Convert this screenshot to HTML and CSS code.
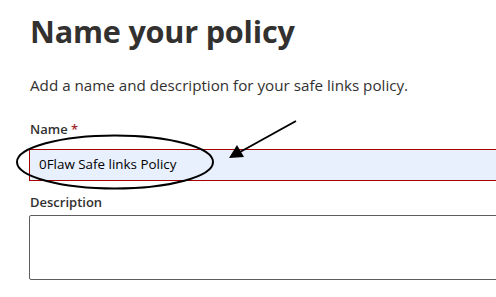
FILE: index.html
```html
<!DOCTYPE html>
<html lang="en">
<head>
<meta charset="utf-8">
<link rel="stylesheet" href="styles.css">
</head>
<body>
<main class="page">
  <h1 class="title">Name your policy</h1>
  <p class="intro">Add a name and description for your safe links policy.</p>
  <div class="field">
    <label class="label">Name <span class="req">*</span></label>
    <div class="input">0Flaw Safe links Policy</div>
  </div>
  <div class="field field-desc">
    <label class="label">Description</label>
    <div class="textarea"></div>
  </div>
  <svg class="annot" width="496" height="297" viewBox="0 0 496 297" xmlns="http://www.w3.org/2000/svg">
    <ellipse cx="115" cy="162" rx="98" ry="26.5" fill="none" stroke="#000" stroke-width="2"/>
    <line x1="296" y1="121" x2="240" y2="152" stroke="#000" stroke-width="2"/>
    <polygon points="229,158 237,145 244,157" fill="#000"/>
  </svg>
</main>
</body>
</html>
```
FILE: styles.css
```css
html, body {
  margin: 0;
  padding: 0;
  background: #fff;
  overflow: hidden;
}
.page {
  position: relative;
  width: 496px;
  height: 297px;
  overflow: hidden;
  padding-left: 29px;
  box-sizing: border-box;
  font-family: "Open Sans", "Noto Sans", sans-serif;
  color: #323130;
}
.title {
  margin: 0;
  padding-top: 11px;
  padding-left: 1px;
  font-size: 30.6px;
  line-height: 40px;
  font-weight: 700;
  letter-spacing: -0.2px;
  color: #323130;
}
.intro {
  margin: 0;
  padding-top: 24px;
  padding-left: 1px;
  font-size: 15.2px;
  line-height: 20px;
  font-weight: 400;
}
.field {
  display: flex;
  flex-direction: column;
}
.label {
  display: block;
  padding-top: 25px;
  padding-left: 1px;
  font-size: 13px;
  line-height: 18px;
  font-weight: 600;
  color: #323130;
}
.req {
  color: #a4262c;
}
.input {
  margin-top: 11px;
  width: 520px;
  height: 32px;
  box-sizing: border-box;
  border: 1px solid #a80000;
  background: #e8f0fe;
  padding-left: 9px;
  font-size: 13.4px;
  line-height: 28px;
  color: #000;
}
.field-desc .label {
  padding-top: 12px;
}
.textarea {
  margin-top: 4px;
  width: 520px;
  height: 65px;
  box-sizing: border-box;
  border: 1px solid #605e5c;
  border-radius: 2px;
  background: #fff;
}
.annot {
  position: absolute;
  left: 0;
  top: 0;
  pointer-events: none;
}
```
